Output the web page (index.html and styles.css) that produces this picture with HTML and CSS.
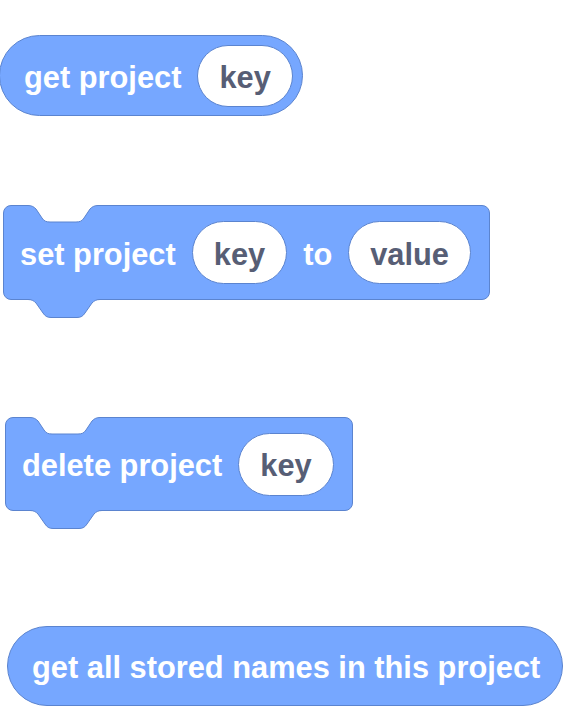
FILE: index.html
```html
<!DOCTYPE html>
<html lang="en">
<head>
    <meta charset="UTF-8">
    <meta name="viewport" content="width=device-width, initial-scale=1.0">
    <title>Project storage blocks</title>
    <link rel="stylesheet" href="styles.css">
</head>
<body>
    <div class="palette">
        <div class="block reporter row-get">
            <span class="label">get project</span>
            <span class="input">key</span>
        </div>

        <div class="block command row-set">
            <svg class="notch" width="71" height="19" viewBox="0 0 71 19">
                <path class="notch-fill" d="M0 0 L0 0.5 C4 0.5 6 2 8 4 L14 13 C16 16 18 17 22 17 H48 C52 17 54 16 56 13 L62 4 C64 2 66 0.5 70 0.5 L70 0 Z"/>
                <path class="notch-line" d="M0 0.5 C4 0.5 6 2 8 4 L14 13 C16 16 18 17 22 17 H48 C52 17 54 16 56 13 L62 4 C64 2 66 0.5 70 0.5"/>
            </svg>
            <span class="label">set project</span>
            <span class="input">key</span>
            <span class="label">to</span>
            <span class="input">value</span>
            <svg class="tab" width="72" height="20" viewBox="0 0 72 20">
                <path class="tab-fill" d="M0 0 L0 0.5 C4 0.5 6 2 8 4 L15 14 C17 17 19 18.5 23 18.5 H49 C53 18.5 55 17 57 14 L64 4 C66 2 68 0.5 72 0.5 L72 0 Z"/>
                <path class="notch-line" d="M0 0.5 C4 0.5 6 2 8 4 L15 14 C17 17 19 18.5 23 18.5 H49 C53 18.5 55 17 57 14 L64 4 C66 2 68 0.5 72 0.5"/>
            </svg>
        </div>

        <div class="block command row-delete">
            <svg class="notch" width="71" height="19" viewBox="0 0 71 19">
                <path class="notch-fill" d="M0 0 L0 0.5 C4 0.5 6 2 8 4 L14 13 C16 16 18 17 22 17 H48 C52 17 54 16 56 13 L62 4 C64 2 66 0.5 70 0.5 L70 0 Z"/>
                <path class="notch-line" d="M0 0.5 C4 0.5 6 2 8 4 L14 13 C16 16 18 17 22 17 H48 C52 17 54 16 56 13 L62 4 C64 2 66 0.5 70 0.5"/>
            </svg>
            <span class="label">delete project</span>
            <span class="input">key</span>
            <svg class="tab" width="72" height="20" viewBox="0 0 72 20">
                <path class="tab-fill" d="M0 0 L0 0.5 C4 0.5 6 2 8 4 L15 14 C17 17 19 18.5 23 18.5 H49 C53 18.5 55 17 57 14 L64 4 C66 2 68 0.5 72 0.5 L72 0 Z"/>
                <path class="notch-line" d="M0 0.5 C4 0.5 6 2 8 4 L15 14 C17 17 19 18.5 23 18.5 H49 C53 18.5 55 17 57 14 L64 4 C66 2 68 0.5 72 0.5"/>
            </svg>
        </div>

        <div class="block reporter wide row-names">
            <span class="label">get all stored names in this project</span>
        </div>
    </div>
</body>
</html>
```

FILE: styles.css
```css
body {
    margin: 0;
    background-color: #fff;
    font-family: "Liberation Sans", Arial, sans-serif;
}
.palette {
    display: flex;
    flex-direction: column;
    align-items: flex-start;
    padding-top: 35px;
}
.block {
    position: relative;
    display: flex;
    align-items: center;
    gap: 16px;
    box-sizing: border-box;
    background-color: #76a7ff;
    border: 1px solid #5b84cf;
    color: #fff;
    font-size: 30.8px;
    font-weight: bold;
    white-space: nowrap;
}
.label {
    padding-top: 4px;
}
.reporter {
    height: 81px;
    border-radius: 41px;
    padding: 0 9px 0 24px;
}
.command {
    height: 95px;
    border-radius: 8px;
    padding: 0 18px 0 16px;
}
.wide {
    height: 80px;
    border-radius: 40px;
    padding: 0 22px 0 24px;
}
.input {
    display: flex;
    align-items: center;
    box-sizing: border-box;
    height: 63px;
    padding: 4px 21px 0;
    border-radius: 32px;
    background-color: #fff;
    border: 1px solid #5b84cf;
    color: #575e75;
}
.reporter .input {
    height: 62px;
}
.notch {
    position: absolute;
    top: -1px;
    left: 24px;
}
.tab {
    position: absolute;
    top: 100%;
    left: 24px;
}
.notch-fill {
    fill: #fff;
}
.tab-fill {
    fill: #76a7ff;
}
.notch-line {
    fill: none;
    stroke: #5b84cf;
    stroke-width: 1;
}
.row-get {
    margin-left: -1px;
}
.row-set {
    margin-top: 89px;
    margin-left: 3px;
}
.row-delete {
    margin-top: 117px;
    margin-left: 5px;
    height: 94px;
}
.row-names {
    margin-top: 115px;
    margin-left: 7px;
}
```
